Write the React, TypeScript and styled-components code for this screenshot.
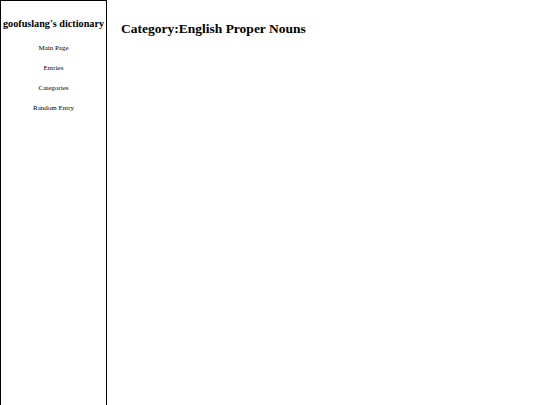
import styled, { createGlobalStyle } from 'styled-components';

const Global = createGlobalStyle`
	html, body { margin: 0; padding: 0; background: #fff; }
	body { font-family: "Liberation Serif", "Times New Roman", serif; color: #000; }
`;

const Page = styled.div`
	display: flex;
	height: 405px;
	overflow: hidden;
`;

const Sidebar = styled.nav`
	box-sizing: border-box;
	width: 107px;
	flex-shrink: 0;
	height: 100%;
	border: 1px solid #000;
	border-bottom: none;
	display: flex;
	flex-direction: column;
	align-items: center;
	padding-top: 16px;
`;

const SiteTitle = styled.div`
	font-size: 10.2px;
	font-weight: bold;
	white-space: nowrap;
	line-height: 13px;
	margin-bottom: 14px;
`;

const NavLink = styled.a`
	font-size: 7px;
	line-height: 8px;
	text-decoration: none;
	margin-bottom: 12px;

	&, &:visited {
		color: #000;
	}
`;

const Main = styled.main`
	padding: 20px 0 0 14px;
`;

const Heading = styled.h1`
	margin: 0;
	font-size: 13.5px;
	line-height: 17px;
	font-weight: bold;
`;

const links = ['Main Page', 'Entries', 'Categories', 'Random Entry'];

const App = () => (
	<>
		<Global />
		<Page>
			<Sidebar>
				<SiteTitle>goofuslang's dictionary</SiteTitle>
				{links.map((l) => (
					<NavLink key={l} href="#">
						{l}
					</NavLink>
				))}
			</Sidebar>
			<Main>
				<Heading>Category:English Proper Nouns</Heading>
			</Main>
		</Page>
	</>
);

export default App;
